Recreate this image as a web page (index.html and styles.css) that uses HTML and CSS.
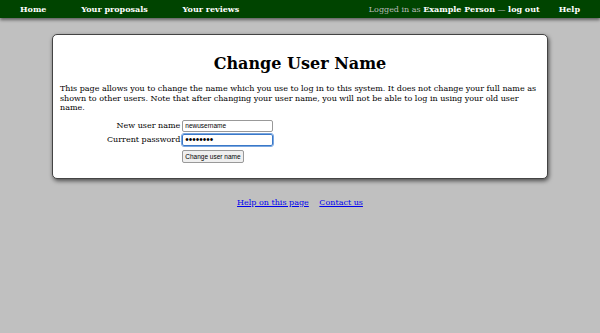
FILE: index.html
```html
<!DOCTYPE html>
<html lang="en">
<head>
  <meta charset="UTF-8">
  <title>Change User Name</title>
  <link rel="stylesheet" href="styles.css">
</head>
<body>
  <div class="topbar">
    <div class="nav-left">
      <a href="#">Home</a>
      <a href="#">Your proposals</a>
      <a href="#">Your reviews</a>
    </div>
    <div class="nav-right">
      <span class="login">Logged in as <strong>Example Person</strong> &mdash; <a href="#" class="inline">log out</a></span>
      <a href="#">Help</a>
    </div>
  </div>

  <div class="panel">
    <h1>Change User Name</h1>
    <p>This page allows you to change the name which you use to log in to this system. It does not change your full name as shown to other users. Note that after changing your user name, you will not be able to log in using your old user name.</p>
    <table class="form">
      <tr>
        <th>New user name</th>
        <td><input type="text" value="newusername"></td>
      </tr>
      <tr>
        <th>Current password</th>
        <td><input type="password" value="password" class="focus"></td>
      </tr>
      <tr>
        <th></th>
        <td><button>Change user name</button></td>
      </tr>
    </table>
  </div>

  <div class="footer">
    <a href="#">Help on this page</a>
    <a href="#">Contact us</a>
  </div>
</body>
</html>
```

FILE: styles.css
```css
html, body {
  margin: 0;
  padding: 0;
  background: #c0c0c0;
  font-family: 'DejaVu Serif', serif;
  font-size: 8px;
  color: #000;
}
.topbar {
  background: #004400;
  height: 18px;
  display: flex;
  justify-content: space-between;
  align-items: center;
  padding: 0 20px;
  box-shadow: 0 2px 3px rgba(0, 0, 0, 0.5);
  font-size: 8px;
  font-weight: bold;
  white-space: nowrap;
}
.topbar a {
  color: #fff;
  text-decoration: none;
}
.nav-left a {
  margin-right: 32px;
}
.nav-right {
  display: flex;
  align-items: center;
}
.nav-right > a {
  margin-left: 19px;
}
.login {
  color: #bbb;
  font-weight: normal;
}
.login strong,
.login a.inline {
  color: #fff;
  font-weight: bold;
}
.panel {
  background: #fff;
  margin: 16px 52px 0;
  padding: 19px 7px 14px;
  border-radius: 5px;
  border: 1px solid #444;
  box-shadow: 1px 2px 4px rgba(0, 0, 0, 0.6);
}
h1 {
  margin: 0 0 11px;
  font-size: 16px;
  text-align: center;
}
p {
  margin: 0 0 6px;
  line-height: 9.6px;
}
.form {
  border-collapse: collapse;
  margin-left: 47px;
}
.form th {
  text-align: right;
  font-weight: normal;
  padding: 1px 2px 1px 0;
}
.form td {
  padding: 1px 0;
}
input {
  width: 85px;
  height: 10px;
  font-family: 'Liberation Sans', sans-serif;
  font-size: 6.5px;
  border: 1px solid #999;
  border-radius: 2px;
  padding: 0 2px;
  margin: 0;
  vertical-align: middle;
}
input.focus {
  font-size: 10px;
  letter-spacing: 0;
  border: 1px solid #3a78c8;
  outline: 1px solid #7aa7e0;
}
button {
  font-family: 'Liberation Sans', sans-serif;
  font-size: 6.5px;
  padding: 2px 2px;
  margin: 2px 0 0;
  background: #efefef;
  border: 1px solid #999;
  border-radius: 2px;
}
.footer {
  text-align: center;
  margin-top: 19px;
}
.footer a {
  color: #00e;
  margin: 0 4px;
}
```
